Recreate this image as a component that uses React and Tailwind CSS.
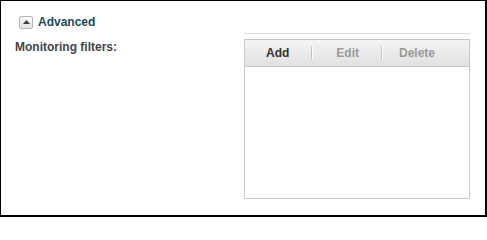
const font = { fontFamily: '"Liberation Sans", Arial, sans-serif' };

const ToggleIcon = () => (
  <span className="flex h-[13px] w-[14px] items-center justify-center rounded-[2px] border border-[#b5b5b5] bg-gradient-to-b from-[#fbfbfb] to-[#e2e2e2]">
    <svg width="7" height="4" viewBox="0 0 7 4">
      <path d="M0 4 L3.5 0 L7 4 Z" fill="#3a3a3a" />
    </svg>
  </span>
);

const Separator = () => (
  <span className="h-[16px] w-[2px] border-l border-[#c4c4c4] border-r border-r-white" />
);

const App = () => {
  return (
    <div
      className="h-[217px] w-[487px] overflow-hidden border-l border-t border-r-2 border-b-2 border-black bg-white"
      style={font}
    >
      <div className="flex items-center gap-[5px] pl-[18px] pt-[14px]">
        <ToggleIcon />
        <span className="text-[12px] font-bold leading-[14px] text-[#1b4a57]">Advanced</span>
      </div>

      <div className="mt-[4px] flex items-start pl-[14px]">
        <span className="mt-[7px] w-[229px] text-[12px] font-bold leading-[14px] text-[#454545]">
          Monitoring filters:
        </span>

        <div className="w-[226px] border-t border-[#dcdcdc] pt-[5px]">
          <div className="border border-[#c8c8c8]">
            <div className="flex h-[27px] items-center border-b border-[#c6c6c6] bg-gradient-to-b from-[#f4f4f4] to-[#e1e1e1] pl-[21px] text-[12px] font-bold">
              <span className="text-[#333333]">Add</span>
              <span className="ml-[22px]"><Separator /></span>
              <span className="ml-[23px] text-[#9a9a9a]">Edit</span>
              <span className="ml-[22px]"><Separator /></span>
              <span className="ml-[16px] text-[#9a9a9a]">Delete</span>
            </div>
            <div className="h-[131px] bg-white" />
          </div>
        </div>
      </div>
    </div>
  );
};

export default App;
